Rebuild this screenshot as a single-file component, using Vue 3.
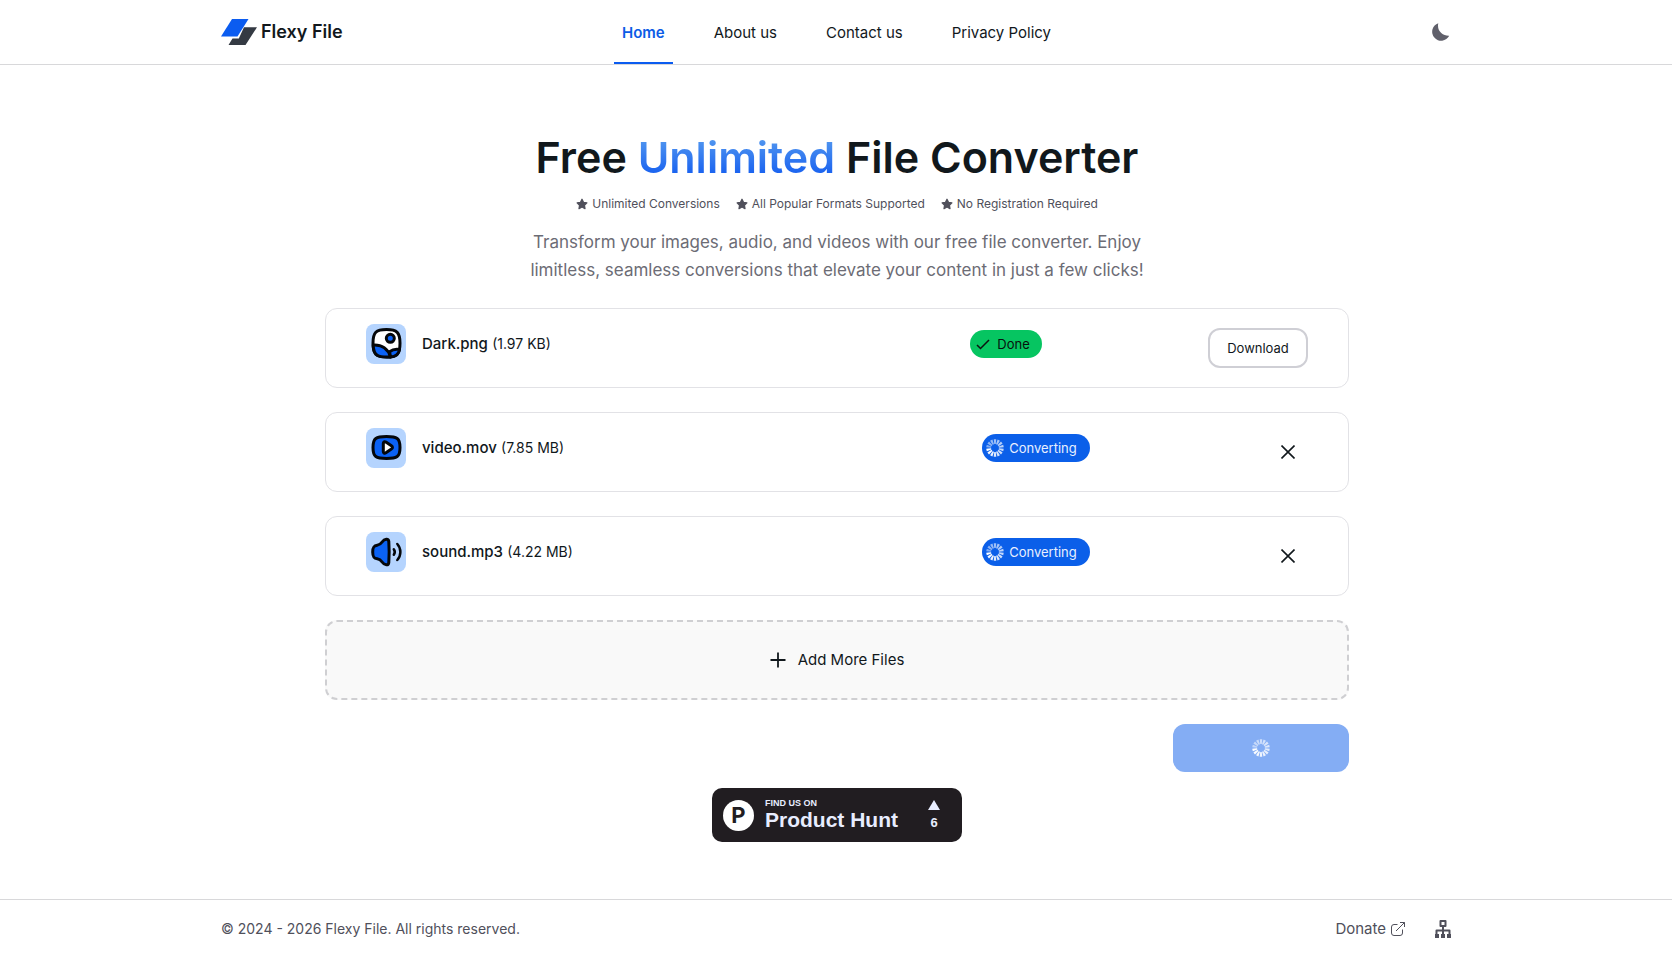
<script setup>
const navLinks = [
  { label: 'Home', active: true },
  { label: 'About us' },
  { label: 'Contact us' },
  { label: 'Privacy Policy' },
]

const perks = ['Unlimited Conversions', 'All Popular Formats Supported', 'No Registration Required']

const files = [
  { name: 'Dark.png', size: '(1.97 KB)', kind: 'image', done: true },
  { name: 'video.mov', size: '(7.85 MB)', kind: 'video', done: false },
  { name: 'sound.mp3', size: '(4.22 MB)', kind: 'audio', done: false },
]

// Spinner blades, fading clockwise from the leading one
const blades = Array.from({ length: 14 }, (_, i) => ({
  transform: `rotate(${(i * 360) / 14} 12 12)`,
  opacity: 1 - (((10 - i + 14) % 14) / 14) * 0.55,
}))
</script>

<template>
  <div class="page">
    <header class="header">
      <div class="container header-inner">
        <a class="brand" href="#">
          <svg width="36" height="26" viewBox="0 0 36 26" aria-hidden="true">
            <path d="M11 0h16.500L16.500 17.500H0z" fill="#0b5cf0" />
            <path d="M23 8.300h13L24.500 26H7.500l4-6.500h6.300z" fill="#343a43" />
          </svg>
          <span>Flexy File</span>
        </a>
        <nav class="nav" aria-label="Main">
          <a
            v-for="link in navLinks"
            :key="link.label"
            href="#"
            class="nav-link"
            :class="{ active: link.active }"
            >{{ link.label }}</a
          >
        </nav>
        <button class="theme" type="button" aria-label="Toggle dark mode">
          <svg width="24" height="24" viewBox="0 0 24 24" aria-hidden="true">
            <path d="M10.300 3.200A9 9 0 1 0 21.200 15.800C15 16.200 8.500 11 10.300 3.200z" fill="#60606b" />
          </svg>
        </button>
      </div>
    </header>

    <main class="main">
      <h1 class="title">Free <span class="accent">Unlimited</span> File Converter</h1>
      <ul class="perks">
        <li v-for="perk in perks" :key="perk">
          <svg width="12" height="12" viewBox="0 0 24 24" aria-hidden="true">
            <path
              d="M12 2.500l3 6.200 6.800 1-4.900 4.800 1.100 6.800-6-3.200-6 3.200 1.100-6.800-4.900-4.800 6.800-1z"
              fill="#50505b"
              stroke="#50505b"
              stroke-width="2.500"
              stroke-linejoin="round"
            />
          </svg>
          {{ perk }}
        </li>
      </ul>
      <p class="lead">
        Transform your images, audio, and videos with our free file converter. Enjoy limitless,
        seamless conversions that elevate your content in just a few clicks!
      </p>

      <section class="files" aria-label="Files">
        <article v-for="file in files" :key="file.name" class="card">
          <div class="file">
            <svg class="tile" width="40" height="40" viewBox="0 0 40 40" aria-hidden="true">
              <rect width="40" height="40" rx="8" fill="#b5d4fe" />
              <g v-if="file.kind === 'image'" stroke="#05070a" stroke-width="3" stroke-linejoin="round">
                <path
                  d="M20.500 5.500C31 5.500 34 8.500 34 19.200S31 33 20.500 33 7 30 7 19.200 10 5.500 20.500 5.500z"
                  fill="#fff"
                />
                <path d="M7.200 21c8.500-.6 15 4 17.300 11.900-12.500.6-17-1-17.300-11.900z" fill="#0b62f5" />
                <path d="M23.500 27.800c3-2.300 6.400-3 10-2.300-.8 5-3.500 7.300-9 7.500-.2-1.800-.5-3.500-1-5.200z" fill="#0b62f5" />
                <circle cx="24.300" cy="14.300" r="4" fill="#0b62f5" />
              </g>
              <g v-else-if="file.kind === 'video'" stroke="#05070a" stroke-width="3" stroke-linejoin="round">
                <path
                  d="M20.500 8.500C31 8.500 34 10 34 19.500S31 30.500 20.500 30.500 7 29 7 19.500 10 8.500 20.500 8.500z"
                  fill="#0b62f5"
                />
                <path d="M17.300 15.500c0-1.700 1.300-2.200 2.600-1.400l5.500 3.700c1.400 1 1.400 2.400 0 3.300l-5.500 3.700c-1.300.8-2.600.3-2.600-1.400z" fill="#fff" />
              </g>
              <g v-else stroke="#05070a" stroke-width="3" stroke-linejoin="round" stroke-linecap="round">
                <path
                  d="M6.700 20c0-4.500 1-6.400 4.500-6.800 2.300-.3 3.600-1.300 4.900-3.200C18.500 6.500 22.500 6.300 22.800 9.500c.5 7 .5 14 0 21-.3 3.200-4.300 3-6.700-.5-1.300-1.900-2.600-2.900-4.900-3.200C7.700 26.400 6.700 24.500 6.700 20z"
                  fill="#0b62f5"
                />
                <path d="M27.800 17.200c1.300 1.800 1.300 3.800 0 5.600M31.300 12c4.100 4.600 4.100 11.400 0 16" fill="none" stroke-width="2.500" />
              </g>
            </svg>
            <p class="file-text">
              <span class="file-name">{{ file.name }}</span> <span class="file-size">{{ file.size }}</span>
            </p>
          </div>

          <span v-if="file.done" class="pill pill-done">
            <svg width="16" height="16" viewBox="0 0 16 16" aria-hidden="true">
              <path d="M2 9l3.500 3.500L14 4" fill="none" stroke="#0b1210" stroke-width="1.500" />
            </svg>
            <span>Done</span>
          </span>
          <span v-else class="pill pill-busy">
            <svg width="18" height="18" viewBox="0 0 24 24" aria-hidden="true">
              <path
                v-for="(blade, i) in blades"
                :key="i"
                d="M11 6.800L10.300.4h3.400L13 6.800z"
                fill="#fff"
                :transform="blade.transform"
                :opacity="blade.opacity"
              />
            </svg>
            <span>Converting</span>
          </span>

          <button v-if="file.done" class="download" type="button">Download</button>
          <button v-else class="remove" type="button" :aria-label="`Remove ${file.name}`">
            <svg width="14" height="14" viewBox="0 0 14 14" aria-hidden="true">
              <path d="M0.500 0.500l13 13M13.500 0.500l-13 13" stroke="#11181c" stroke-width="1.600" />
            </svg>
          </button>
        </article>

        <button class="add" type="button">
          <svg width="16" height="16" viewBox="0 0 16 16" aria-hidden="true">
            <path d="M8 0.500v15M0.500 8h15" stroke="#11181c" stroke-width="1.800" />
          </svg>
          <span>Add More Files</span>
        </button>

        <button class="convert" type="button" disabled aria-label="Converting files">
          <svg width="18" height="18" viewBox="0 0 24 24" aria-hidden="true">
            <path
              v-for="(blade, i) in blades"
              :key="i"
              d="M11 6.800L10.300.4h3.400L13 6.800z"
              fill="#fff"
              :transform="blade.transform"
              :opacity="blade.opacity"
            />
          </svg>
        </button>
      </section>

      <a class="hunt" href="#">
        <span class="hunt-logo">P</span>
        <span class="hunt-text">
          <small>FIND US ON</small>
          <strong>Product Hunt</strong>
        </span>
        <span class="hunt-votes">
          <svg width="12" height="10" viewBox="0 0 12 10" aria-hidden="true">
            <path d="M6 0l6 10H0z" fill="#e8edff" />
          </svg>
          <b>6</b>
        </span>
      </a>
    </main>

    <footer class="footer">
      <div class="container footer-inner">
        <p class="copyright">© 2024 - 2026 Flexy File. All rights reserved.</p>
        <div class="footer-links">
          <a class="donate" href="#">
            <span>Donate</span>
            <svg width="16" height="16" viewBox="0 0 16 16" fill="none" stroke="#50505b" aria-hidden="true">
              <path d="M7.500 3.500H4A2.500 2.500 0 0 0 1.500 6v6A2.500 2.500 0 0 0 4 14.500h6a2.500 2.500 0 0 0 2.500-2.500V8.500M6 10l8.500-8.500M10 1.500h4.500V6" />
            </svg>
          </a>
          <a class="sitemap" href="#" aria-label="Sitemap">
            <svg width="18" height="20" viewBox="0 0 18 20" aria-hidden="true">
              <path
                d="M6.500 2h5v5h-5zM9 7v8M2.500 15v-3.500h13V15"
                fill="none"
                stroke="#50505b"
                stroke-width="2"
                stroke-linejoin="round"
              />
              <path d="M1 15h4v4H1zM7 15h4v4H7zM13 15h4v4h-4z" fill="#50505b" />
            </svg>
          </a>
        </div>
      </div>
    </footer>
  </div>
</template>

<style>
body {
  background: #fff;
}
</style>

<style scoped>
* {
  box-sizing: border-box;
}

.page {
  display: flex;
  flex-direction: column;
  min-height: 100vh;
  color: #11181c;
  font-family: Inter, 'Liberation Sans', sans-serif;
  font-size: 15px;
  line-height: 24px;
}

a {
  color: inherit;
  text-decoration: none;
}

button {
  padding: 0;
  border: 0;
  background: none;
  color: inherit;
  font: inherit;
}

p,
h1,
ul {
  margin: 0;
  padding: 0;
}

svg {
  display: block;
  flex: none;
}

.container {
  width: 100%;
  max-width: 1280px;
  margin: 0 auto;
  padding: 0 24px 0 25px;
}

.header {
  border-bottom: 1px solid #d8d8da;
}

.header-inner {
  display: grid;
  grid-template-columns: 1fr auto 1fr;
  align-items: center;
  height: 64px;
}

.brand {
  display: flex;
  align-items: center;
  gap: 4px;
  font-size: 18px;
  font-weight: 600;
}

.nav {
  display: flex;
  align-self: stretch;
  gap: 33px;
}

.nav-link {
  display: flex;
  align-items: center;
  padding: 3px 8px 0;
  border-bottom: 2px solid transparent;
}

.nav-link.active {
  border-color: #0b5cf0;
  color: #0b5ce6;
  font-weight: 600;
}

.theme {
  justify-self: end;
}

.main {
  display: flex;
  flex: 1;
  flex-direction: column;
  align-items: center;
  width: 100%;
  max-width: 1074px;
  margin: 0 auto;
  padding: 64px 24px 57px 26px;
}

.title {
  font-size: 43px;
  font-weight: 600;
  line-height: 56px;
}

.accent {
  background: linear-gradient(#5ea2ef, #0b55f0);
  background-clip: text;
  color: transparent;
}

.perks {
  display: flex;
  gap: 16px;
  margin-top: 10px;
  color: #50505b;
  font-size: 12px;
  line-height: 18px;
  list-style: none;
}

.perks li {
  display: flex;
  align-items: center;
  gap: 4px;
}

.lead {
  max-width: 640px;
  margin-top: 15px;
  color: #6c6c75;
  font-size: 17px;
  line-height: 28px;
  text-align: center;
}

.files {
  display: flex;
  flex-direction: column;
  gap: 24px;
  width: 100%;
  margin-top: 24px;
}

.card {
  display: flex;
  align-items: center;
  justify-content: space-between;
  height: 80px;
  padding: 0 40px;
  border: 1px solid #e2e2e6;
  border-radius: 12px;
}

.file {
  display: flex;
  flex: 0 1 438px;
  align-items: center;
  gap: 16px;
  padding-bottom: 8px;
}

.file-size {
  font-size: 14px;
}

.file-name {
  font-weight: 500;
}

.pill {
  display: flex;
  align-items: center;
  height: 28px;
  margin-bottom: 8px;
  border-radius: 14px;
  font-size: 13px;
}

.pill-done {
  gap: 6px;
  padding: 0 12px 0 5px;
  background: #06c561;
  color: #07110c;
}

.pill-busy {
  gap: 5px;
  padding: 0 13px 0 4px;
  background: #0b5fe9;
  color: #e8f0ff;
}

.download {
  width: 100px;
  height: 40px;
  border: 2px solid #cfcfd5;
  border-radius: 12px;
  font-size: 13px;
}

.remove {
  display: grid;
  place-items: center;
  width: 40px;
  height: 40px;
}

.add {
  display: flex;
  align-items: center;
  justify-content: center;
  gap: 12px;
  height: 80px;
  border: 2px dashed #cfcfd2;
  border-radius: 12px;
  background: #f9f9f9;
}

.convert {
  display: grid;
  place-items: center;
  align-self: flex-end;
  width: 176px;
  height: 48px;
  border-radius: 12px;
  background: #84adf4;
}

.hunt {
  display: flex;
  align-items: center;
  width: 250px;
  height: 54px;
  margin-top: 16px;
  padding: 0 22px 0 11px;
  border-radius: 10px;
  background: #211d21;
  color: #e8edff;
  font-family: 'Liberation Sans', Arial, sans-serif;
}

.hunt-logo {
  display: grid;
  place-items: center;
  width: 31px;
  height: 31px;
  border-radius: 50%;
  background: #fff;
  color: #211d21;
  font-family: Inter, sans-serif;
  font-size: 22px;
  font-weight: 700;
}

.hunt-text {
  display: flex;
  flex: 1;
  flex-direction: column;
  padding-left: 11px;
}

.hunt-text small {
  font-size: 9px;
  font-weight: 700;
  line-height: 10px;
}

.hunt-text strong {
  font-size: 21px;
  line-height: 24px;
}

.hunt-votes {
  display: flex;
  flex-direction: column;
  align-items: center;
  gap: 6px;
  width: 12px;
}

.hunt-votes b {
  font-size: 13px;
  line-height: 14px;
}

.footer {
  border-top: 1px solid #d8d8da;
  color: #50505b;
}

.footer-inner {
  display: flex;
  align-items: center;
  justify-content: space-between;
  height: 53px;
  padding-top: 4px;
}

.copyright {
  font-size: 14px;
}

.footer-links,
.donate {
  display: flex;
  align-items: center;
}

.footer-links {
  gap: 28px;
}

.donate {
  gap: 4px;
}
</style>
